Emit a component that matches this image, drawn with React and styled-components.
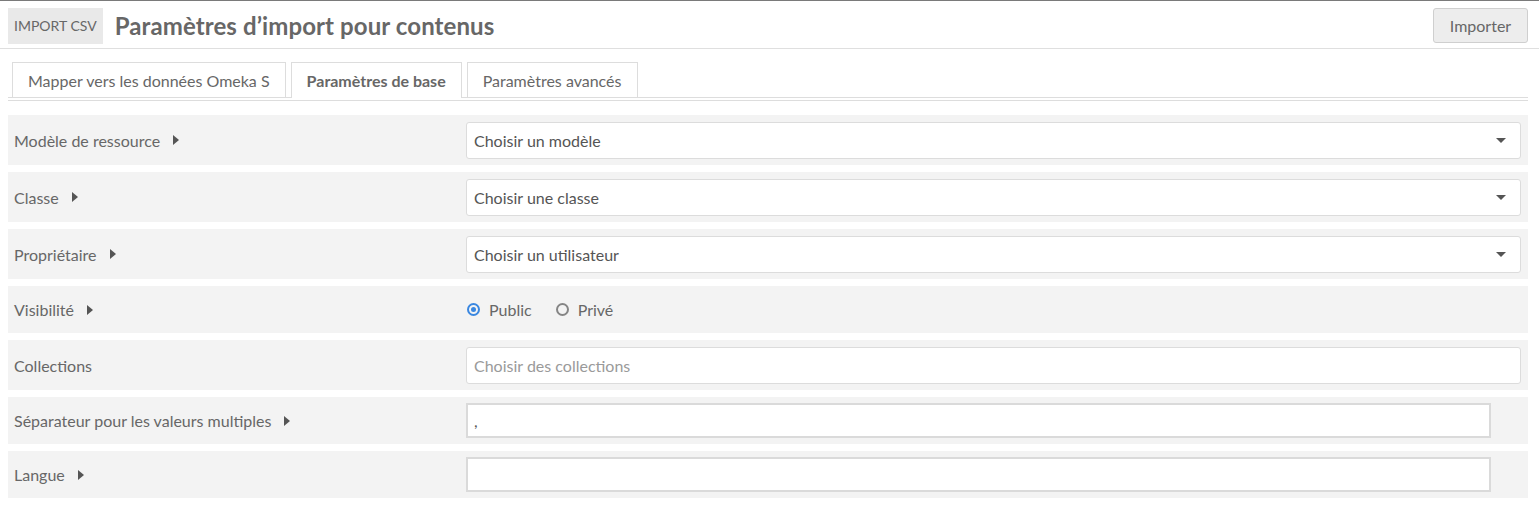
import React from "react";
import styled, { createGlobalStyle } from "styled-components";

const GlobalStyle = createGlobalStyle`
  body {
    margin: 0;
    background: #fff;
    font-family: Lato, "Open Sans", sans-serif;
    color: #676767;
    border-top: 1px solid #7a7a7a;
  }
`;

const rows = [
  { label: "Modèle de ressource", type: "select", value: "Choisir un modèle", caret: true },
  { label: "Classe", type: "select", value: "Choisir une classe", caret: true },
  { label: "Propriétaire", type: "select", value: "Choisir un utilisateur", caret: true },
  { label: "Visibilité", type: "radio", caret: true },
  { label: "Collections", type: "multi", value: "Choisir des collections" },
  { label: "Séparateur pour les valeurs multiples", type: "text", value: ",", caret: true },
  { label: "Langue", type: "text", value: "", caret: true },
];

const App = () => {
  return (
    <>
      <GlobalStyle />
      <Header>
        <Section>IMPORT CSV</Section>
        <Title>Paramètres d’import pour contenus</Title>
        <Button>Importer</Button>
      </Header>
      <Content>
        <Tabs>
          <Tab>Mapper vers les données Omeka S</Tab>
          <Tab active>Paramètres de base</Tab>
          <Tab>Paramètres avancés</Tab>
        </Tabs>
        <Rows>
          {rows.map((r) => (
            <Row key={r.label} tall={r.type === "select" || r.type === "multi"}>
              <Label>
                {r.label}
                {r.caret && <Caret />}
              </Label>
              {r.type === "select" && (
                <Select>
                  {r.value}
                  <Arrow />
                </Select>
              )}
              {r.type === "multi" && <Multi>{r.value}</Multi>}
              {r.type === "text" && <TextBox>{r.value}</TextBox>}
              {r.type === "radio" && (
                <Radios>
                  <RadioLabel>
                    <Radio checked />
                    Public
                  </RadioLabel>
                  <RadioLabel>
                    <Radio />
                    Privé
                  </RadioLabel>
                </Radios>
              )}
            </Row>
          ))}
        </Rows>
      </Content>
    </>
  );
};

const Header = styled.div`
  display: flex;
  align-items: center;
  height: 48px;
  padding: 2px 11px 0 8px;
  border-bottom: 1px solid #dfdfdf;
  box-sizing: border-box;
`;

const Section = styled.div`
  background: #e9e9e9;
  font-size: 14px;
  height: 36px;
  line-height: 36px;
  padding: 0 6px;
`;

const Title = styled.h1`
  margin: 0 0 0 12px;
  font-size: 24px;
  font-weight: 700;
  letter-spacing: 0.1px;
  color: #676767;
`;

const Button = styled.div`
  margin-left: auto;
  width: 95px;
  height: 35px;
  box-sizing: border-box;
  display: flex;
  align-items: center;
  justify-content: center;
  background: #ededed;
  border: 1px solid #cfcfcf;
  border-radius: 3px;
  font-size: 16px;
`;

const Content = styled.div`
  padding: 13px 11px 0 8px;
`;

const Tabs = styled.div`
  display: flex;
  gap: 5px;
  padding-left: 4px;
  border-bottom: 1px solid #ddd;
  height: 35px;
  margin-bottom: 2px;
`;

const Tab = styled.div`
  height: ${({ active }) => (active ? "36px" : "35px")};
  box-sizing: border-box;
  padding: 0 15px;
  display: flex;
  align-items: center;
  font-size: 16px;
  font-weight: ${({ active }) => (active ? 700 : 400)};
  border: 1px solid #ddd;
  border-bottom: none;
  background: #fff;
  position: relative;
  z-index: 1;
`;

const Rows = styled.div`
  display: flex;
  flex-direction: column;
  gap: 7px;
  padding-top: 14px;
  border-top: 1px solid #ddd;
`;

const Row = styled.div`
  display: grid;
  grid-template-columns: 458px 1fr;
  align-items: center;
  background: #f3f3f3;
  height: ${({ tall }) => (tall ? "50px" : "47px")};
  padding-right: 7px;
`;

const Label = styled.div`
  display: flex;
  align-items: center;
  padding-left: 6px;
  font-size: 16px;
`;

const Caret = styled.span`
  width: 0;
  height: 0;
  margin-left: 13px;
  border-top: 5px solid transparent;
  border-bottom: 5px solid transparent;
  border-left: 6px solid #555;
`;

const Select = styled.div`
  height: 37px;
  box-sizing: border-box;
  display: flex;
  align-items: center;
  padding: 0 7px;
  background: #fff;
  border: 1px solid #dcdcdc;
  border-radius: 3px;
  font-size: 16px;
  color: #555;
`;

const Arrow = styled.span`
  margin-left: auto;
  margin-right: 7px;
  width: 0;
  height: 0;
  border-left: 5px solid transparent;
  border-right: 5px solid transparent;
  border-top: 5px solid #555;
`;

const Multi = styled(Select)`
  color: #9a9a9a;
`;

const TextBox = styled.div`
  height: 35px;
  width: 1025px;
  box-sizing: border-box;
  display: flex;
  align-items: center;
  padding: 0 6px;
  background: #fff;
  border: 2px solid #dadada;
  font-size: 16px;
  color: #555;
`;

const Radios = styled.div`
  display: flex;
  gap: 24px;
  padding-left: 1px;
`;

const RadioLabel = styled.label`
  display: flex;
  align-items: center;
  gap: 9px;
  font-size: 16px;
`;

const Radio = styled.span`
  width: 13px;
  height: 13px;
  box-sizing: border-box;
  border-radius: 50%;
  border: 2px solid ${({ checked }) => (checked ? "#3a87e0" : "#858585")};
  display: flex;
  align-items: center;
  justify-content: center;
  &::after {
    content: "";
    width: 5px;
    height: 5px;
    border-radius: 50%;
    background: ${({ checked }) => (checked ? "#3a87e0" : "transparent")};
  }
`;

export default App;
